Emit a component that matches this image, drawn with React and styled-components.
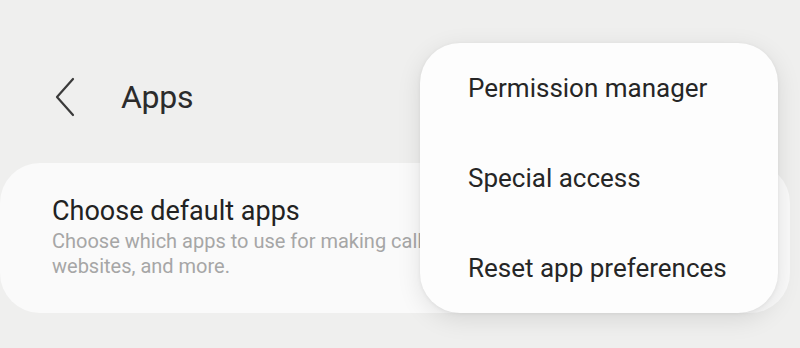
import React from "react";
import styled, { createGlobalStyle } from "styled-components";

const GlobalStyle = createGlobalStyle`
    body {
        margin: 0;
        background: #efefee;
        font-family: Roboto, "Noto Sans", "Liberation Sans", sans-serif;
    }
`;

const menuItems = ["Permission manager", "Special access", "Reset app preferences"];

const App = () => {
    return (
        <Screen>
            <GlobalStyle />
            <Header>
                <BackButton aria-label="Back">
                    <svg width="22" height="40" viewBox="0 0 22 40" fill="none">
                        <path d="M19 2 L3 20 L19 38" stroke="#3a3a3a" strokeWidth="2.2" strokeLinecap="round" strokeLinejoin="round" />
                    </svg>
                </BackButton>
                <Title>Apps</Title>
            </Header>
            <Card>
                <ItemTitle>Choose default apps</ItemTitle>
                <ItemSummary>
                    Choose which apps to use for making calls, sending messages, going to websites, and more.
                </ItemSummary>
            </Card>
            {/* overflow menu opened from the header, lies over the card */}
            <Menu>
                {menuItems.map(item => (
                    <MenuItem key={item}>{item}</MenuItem>
                ))}
            </Menu>
        </Screen>
    );
};

const Screen = styled.div`
    position: relative;
    width: 800px;
    height: 348px;
    overflow: hidden;
`;

const Header = styled.div`
    display: flex;
    align-items: center;
    height: 74px;
    padding: 60px 0 0 54px;
    gap: 45px;
`;

const BackButton = styled.div`
    display: flex;
    align-items: center;
    width: 22px;
    height: 40px;
`;

const Title = styled.h1`
    margin: 0;
    font-size: 32px;
    font-weight: 400;
    color: #2b2b2b;
    letter-spacing: -0.3px;
`;

const Card = styled.div`
    margin-top: 29px;
    width: 790px;
    height: 150px;
    box-sizing: border-box;
    padding: 32px 0 0 52px;
    background: #fafafa;
    border-radius: 40px;
    overflow: hidden;
`;

const ItemTitle = styled.div`
    font-size: 27px;
    line-height: 32px;
    color: #222;
`;

const ItemSummary = styled.div`
    margin-top: 2px;
    width: 690px;
    font-size: 20px;
    line-height: 25px;
    color: #a6a6a6;
`;

const Menu = styled.div`
    position: absolute;
    left: 420px;
    top: 43px;
    width: 358px;
    display: flex;
    flex-direction: column;
    background: #fdfdfd;
    border-radius: 40px;
    box-shadow: 0 6px 24px rgba(0, 0, 0, 0.1), 0 1px 4px rgba(0, 0, 0, 0.06);
`;

const MenuItem = styled.div`
    height: 90px;
    line-height: 90px;
    padding-left: 48px;
    font-size: 26px;
    color: #262626;
`;

export default App;
